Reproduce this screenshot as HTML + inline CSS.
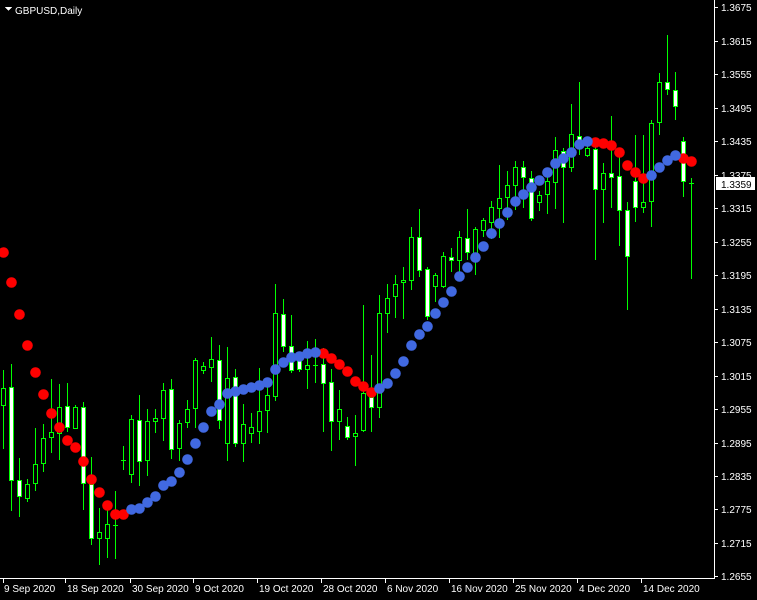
<!DOCTYPE html>
<html><head><meta charset="utf-8"><style>
html,body{margin:0;padding:0;background:#000;}
svg{display:block;font-family:"Liberation Sans",sans-serif;font-size:10px;}
</style></head><body>
<svg width="757" height="600" viewBox="0 0 757 600" xmlns="http://www.w3.org/2000/svg" shape-rendering="crispEdges">
<rect width="757" height="600" fill="#000"/>
<path stroke="#00ff00" fill="none" d="M3.5 370V449M11.5 364V511M19.5 458V517M27.5 479V502M35.5 428V491M43.5 424V472M51.5 379V453M59.5 384V460M67.5 383V432M75.5 405V429M83.5 402V510M91.5 457V545M99.5 508V565M107.5 510V558M115.5 491V559M123.5 446V470M131.5 415V483M139.5 395V486M147.5 409V476M155.5 409V433M163.5 383V441M171.5 379V459M179.5 420V461M187.5 400V428M195.5 358V428M203.5 362V374M211.5 337V382M219.5 345V429M227.5 347V461M235.5 369V447M243.5 404V462M251.5 413V443M259.5 368V444M267.5 385V433M275.5 284V401M283.5 299V352M291.5 315V373M299.5 352V372M307.5 341V389M315.5 339V383M323.5 348V432M331.5 369V451M339.5 390V440M347.5 417V440M355.5 415V466M363.5 305V432M371.5 355V432M379.5 295V418M387.5 284V333M395.5 275V318M403.5 267V319M411.5 227V290M419.5 209V277M427.5 267V320M435.5 273V302M443.5 252V288M451.5 248V272M459.5 231V277M467.5 209V260M475.5 227V275M483.5 218V237M491.5 201V239M499.5 165V238M507.5 171V220M515.5 161V210M523.5 161V208M531.5 171V221M539.5 191V211M547.5 171V214M555.5 137V209M563.5 148V223M571.5 104V172M579.5 82V155M587.5 146V157M595.5 145V260M603.5 163V223M611.5 116V208M619.5 154V246M627.5 202V310M635.5 135V222M643.5 135V213M651.5 120V227M659.5 73V135M667.5 35V95M675.5 72V120M683.5 137V197M691.5 178V279M113 525.5H118M121 460.5H126M313 365.5H318M689 183.5H694"/>
<g stroke="#00ff00" fill="#000">
<rect x="1.5" y="388.5" width="4" height="17"/><rect x="25.5" y="484.5" width="4" height="14"/><rect x="33.5" y="464.5" width="4" height="19"/><rect x="41.5" y="438.5" width="4" height="25"/><rect x="49.5" y="432.5" width="4" height="5"/><rect x="57.5" y="407.5" width="4" height="26"/><rect x="73.5" y="407.5" width="4" height="21"/><rect x="97.5" y="532.5" width="4" height="6"/><rect x="105.5" y="524.5" width="4" height="14"/><rect x="129.5" y="419.5" width="4" height="55"/><rect x="145.5" y="421.5" width="4" height="39"/><rect x="153.5" y="418.5" width="4" height="3"/><rect x="161.5" y="390.5" width="4" height="28"/><rect x="177.5" y="423.5" width="4" height="25"/><rect x="185.5" y="409.5" width="4" height="13"/><rect x="193.5" y="360.5" width="4" height="48"/><rect x="201.5" y="366.5" width="4" height="4"/><rect x="209.5" y="359.5" width="4" height="8"/><rect x="225.5" y="378.5" width="4" height="65"/><rect x="241.5" y="424.5" width="4" height="19"/><rect x="249.5" y="427.5" width="4" height="6"/><rect x="257.5" y="411.5" width="4" height="20"/><rect x="265.5" y="395.5" width="4" height="15"/><rect x="273.5" y="313.5" width="4" height="83"/><rect x="305.5" y="365.5" width="4" height="4"/><rect x="337.5" y="409.5" width="4" height="12"/><rect x="353.5" y="433.5" width="4" height="3"/><rect x="361.5" y="393.5" width="4" height="37"/><rect x="377.5" y="313.5" width="4" height="94"/><rect x="385.5" y="298.5" width="4" height="15"/><rect x="393.5" y="284.5" width="4" height="12"/><rect x="401.5" y="280.5" width="4" height="2"/><rect x="409.5" y="237.5" width="4" height="43"/><rect x="433.5" y="275.5" width="4" height="11"/><rect x="441.5" y="256.5" width="4" height="30"/><rect x="457.5" y="237.5" width="4" height="23"/><rect x="473.5" y="229.5" width="4" height="26"/><rect x="481.5" y="220.5" width="4" height="10"/><rect x="489.5" y="207.5" width="4" height="15"/><rect x="497.5" y="198.5" width="4" height="10"/><rect x="505.5" y="185.5" width="4" height="12"/><rect x="513.5" y="167.5" width="4" height="18"/><rect x="537.5" y="195.5" width="4" height="7"/><rect x="545.5" y="181.5" width="4" height="13"/><rect x="553.5" y="150.5" width="4" height="32"/><rect x="569.5" y="134.5" width="4" height="33"/><rect x="585.5" y="148.5" width="4" height="7"/><rect x="601.5" y="173.5" width="4" height="16"/><rect x="641.5" y="202.5" width="4" height="5"/><rect x="649.5" y="123.5" width="4" height="78"/><rect x="657.5" y="82.5" width="4" height="40"/>
</g>
<g stroke="#00ff00" fill="#fff">
<rect x="9.5" y="387.5" width="4" height="93"/><rect x="17.5" y="480.5" width="4" height="16"/><rect x="65.5" y="406.5" width="4" height="21"/><rect x="81.5" y="407.5" width="4" height="76"/><rect x="89.5" y="484.5" width="4" height="54"/><rect x="137.5" y="420.5" width="4" height="41"/><rect x="169.5" y="389.5" width="4" height="60"/><rect x="217.5" y="360.5" width="4" height="60"/><rect x="233.5" y="377.5" width="4" height="66"/><rect x="281.5" y="314.5" width="4" height="32"/><rect x="289.5" y="346.5" width="4" height="24"/><rect x="297.5" y="360.5" width="4" height="9"/><rect x="321.5" y="364.5" width="4" height="19"/><rect x="329.5" y="382.5" width="4" height="39"/><rect x="345.5" y="426.5" width="4" height="11"/><rect x="369.5" y="397.5" width="4" height="10"/><rect x="417.5" y="237.5" width="4" height="33"/><rect x="425.5" y="269.5" width="4" height="47"/><rect x="449.5" y="257.5" width="4" height="3"/><rect x="465.5" y="238.5" width="4" height="14"/><rect x="521.5" y="167.5" width="4" height="10"/><rect x="529.5" y="178.5" width="4" height="40"/><rect x="561.5" y="151.5" width="4" height="16"/><rect x="577.5" y="136.5" width="4" height="4"/><rect x="593.5" y="149.5" width="4" height="40"/><rect x="609.5" y="173.5" width="4" height="4"/><rect x="617.5" y="176.5" width="4" height="34"/><rect x="625.5" y="210.5" width="4" height="46"/><rect x="633.5" y="181.5" width="4" height="26"/><rect x="665.5" y="82.5" width="4" height="7"/><rect x="673.5" y="90.5" width="4" height="16"/><rect x="681.5" y="141.5" width="4" height="40"/>
</g>
<g shape-rendering="auto">
<g fill="#ff0000">
<circle cx="3.5" cy="252.5" r="5.3"/><circle cx="11.5" cy="282.5" r="5.3"/><circle cx="19.5" cy="314.5" r="5.3"/><circle cx="27.5" cy="345.5" r="5.3"/><circle cx="35.5" cy="372.5" r="5.3"/><circle cx="43.5" cy="394.5" r="5.3"/><circle cx="51.5" cy="413.5" r="5.3"/><circle cx="59.5" cy="427.5" r="5.3"/><circle cx="67.5" cy="440.5" r="5.3"/><circle cx="75.5" cy="447.5" r="5.3"/><circle cx="83.5" cy="461.5" r="5.3"/><circle cx="91.5" cy="479.5" r="5.3"/><circle cx="99.5" cy="492.5" r="5.3"/><circle cx="107.5" cy="505.5" r="5.3"/><circle cx="115.5" cy="514.5" r="5.3"/><circle cx="123.5" cy="514.5" r="5.3"/>
<circle cx="323.5" cy="353.5" r="5.3"/><circle cx="331.5" cy="358.5" r="5.3"/><circle cx="339.5" cy="364.5" r="5.3"/><circle cx="347.5" cy="371.5" r="5.3"/><circle cx="355.5" cy="381.5" r="5.3"/><circle cx="363.5" cy="386.5" r="5.3"/><circle cx="371.5" cy="392.5" r="5.3"/>
<circle cx="595.5" cy="142.5" r="5.3"/><circle cx="603.5" cy="143.5" r="5.3"/><circle cx="611.5" cy="145.5" r="5.3"/><circle cx="619.5" cy="152.5" r="5.3"/><circle cx="627.5" cy="165.5" r="5.3"/><circle cx="635.5" cy="172.5" r="5.3"/><circle cx="643.5" cy="178.5" r="5.3"/><circle cx="683.5" cy="158.5" r="5.3"/><circle cx="691.5" cy="161.5" r="5.3"/>
</g>
<g fill="#4169e1">
<circle cx="131.5" cy="509.5" r="5.3"/><circle cx="139.5" cy="508.5" r="5.3"/><circle cx="147.5" cy="502.5" r="5.3"/><circle cx="155.5" cy="496.5" r="5.3"/><circle cx="163.5" cy="485.5" r="5.3"/><circle cx="171.5" cy="481.5" r="5.3"/><circle cx="179.5" cy="472.5" r="5.3"/><circle cx="187.5" cy="459.5" r="5.3"/><circle cx="195.5" cy="443.5" r="5.3"/><circle cx="203.5" cy="427.5" r="5.3"/><circle cx="211.5" cy="411.5" r="5.3"/><circle cx="219.5" cy="404.5" r="5.3"/><circle cx="227.5" cy="393.5" r="5.3"/><circle cx="235.5" cy="391.5" r="5.3"/><circle cx="243.5" cy="389.5" r="5.3"/><circle cx="251.5" cy="387.5" r="5.3"/><circle cx="259.5" cy="385.5" r="5.3"/><circle cx="267.5" cy="382.5" r="5.3"/><circle cx="275.5" cy="369.5" r="5.3"/><circle cx="283.5" cy="362.5" r="5.3"/><circle cx="291.5" cy="357.5" r="5.3"/><circle cx="299.5" cy="356.5" r="5.3"/><circle cx="307.5" cy="353.5" r="5.3"/><circle cx="315.5" cy="352.5" r="5.3"/>
<circle cx="379.5" cy="388.5" r="5.3"/><circle cx="387.5" cy="383.5" r="5.3"/><circle cx="395.5" cy="373.5" r="5.3"/><circle cx="403.5" cy="361.5" r="5.3"/><circle cx="411.5" cy="345.5" r="5.3"/><circle cx="419.5" cy="334.5" r="5.3"/><circle cx="427.5" cy="326.5" r="5.3"/><circle cx="435.5" cy="313.5" r="5.3"/><circle cx="443.5" cy="302.5" r="5.3"/><circle cx="451.5" cy="291.5" r="5.3"/><circle cx="459.5" cy="276.5" r="5.3"/><circle cx="467.5" cy="267.5" r="5.3"/><circle cx="475.5" cy="257.5" r="5.3"/><circle cx="483.5" cy="246.5" r="5.3"/><circle cx="491.5" cy="233.5" r="5.3"/><circle cx="499.5" cy="223.5" r="5.3"/><circle cx="507.5" cy="212.5" r="5.3"/><circle cx="515.5" cy="201.5" r="5.3"/><circle cx="523.5" cy="194.5" r="5.3"/><circle cx="531.5" cy="187.5" r="5.3"/><circle cx="539.5" cy="180.5" r="5.3"/><circle cx="547.5" cy="172.5" r="5.3"/><circle cx="555.5" cy="163.5" r="5.3"/><circle cx="563.5" cy="158.5" r="5.3"/><circle cx="571.5" cy="152.5" r="5.3"/><circle cx="579.5" cy="144.5" r="5.3"/><circle cx="587.5" cy="141.5" r="5.3"/>
<circle cx="651.5" cy="175.5" r="5.3"/><circle cx="659.5" cy="167.5" r="5.3"/><circle cx="667.5" cy="160.5" r="5.3"/><circle cx="675.5" cy="155.5" r="5.3"/>
</g>
</g>
<path d="M714.5 0V578.5H0" stroke="#fff" fill="none"/>
<path d="M714 7.5h4M714 41.5h4M714 74.5h4M714 108.5h4M714 141.5h4M714 175.5h4M714 208.5h4M714 242.5h4M714 275.5h4M714 309.5h4M714 342.5h4M714 376.5h4M714 409.5h4M714 443.5h4M714 476.5h4M714 509.5h4M714 543.5h4M714 576.5h4M3.5 578v5M65.5 578v5M130.5 578v5M193.5 578v5M257.5 578v5M321.5 578v5M385.5 578v5M449.5 578v5M513.5 578v5M577.5 578v5M641.5 578v5" stroke="#fff"/>
<g fill="#fff" font-size="10">
<text x="721" y="11">1.3675</text><text x="721" y="45">1.3615</text><text x="721" y="78">1.3555</text><text x="721" y="112">1.3495</text><text x="721" y="145">1.3435</text><text x="721" y="179">1.3375</text><text x="721" y="212">1.3315</text><text x="721" y="246">1.3255</text><text x="721" y="279">1.3195</text><text x="721" y="313">1.3135</text><text x="721" y="346">1.3075</text><text x="721" y="380">1.3015</text><text x="721" y="413">1.2955</text><text x="721" y="447">1.2895</text><text x="721" y="480">1.2835</text><text x="721" y="513">1.2775</text><text x="721" y="547">1.2715</text><text x="721" y="580">1.2655</text>
</g>
<rect x="716" y="177" width="39" height="13" fill="#fff"/>
<text x="721" y="188" fill="#000" font-size="10">1.3359</text>
<g fill="#fff" font-size="10">
<text x="4" y="592">9 Sep 2020</text><text x="67" y="592">18 Sep 2020</text><text x="132" y="592">30 Sep 2020</text><text x="195" y="592">9 Oct 2020</text><text x="259" y="592">19 Oct 2020</text><text x="323" y="592">28 Oct 2020</text><text x="387" y="592">6 Nov 2020</text><text x="451" y="592">16 Nov 2020</text><text x="515" y="592">25 Nov 2020</text><text x="579" y="592">4 Dec 2020</text><text x="643" y="592">14 Dec 2020</text>
</g>
<path d="M5 7h7l-3.5 4z" fill="#fff"/>
<text x="15" y="14" fill="#fff" font-size="10">GBPUSD,Daily</text>
</svg>
</body></html>
